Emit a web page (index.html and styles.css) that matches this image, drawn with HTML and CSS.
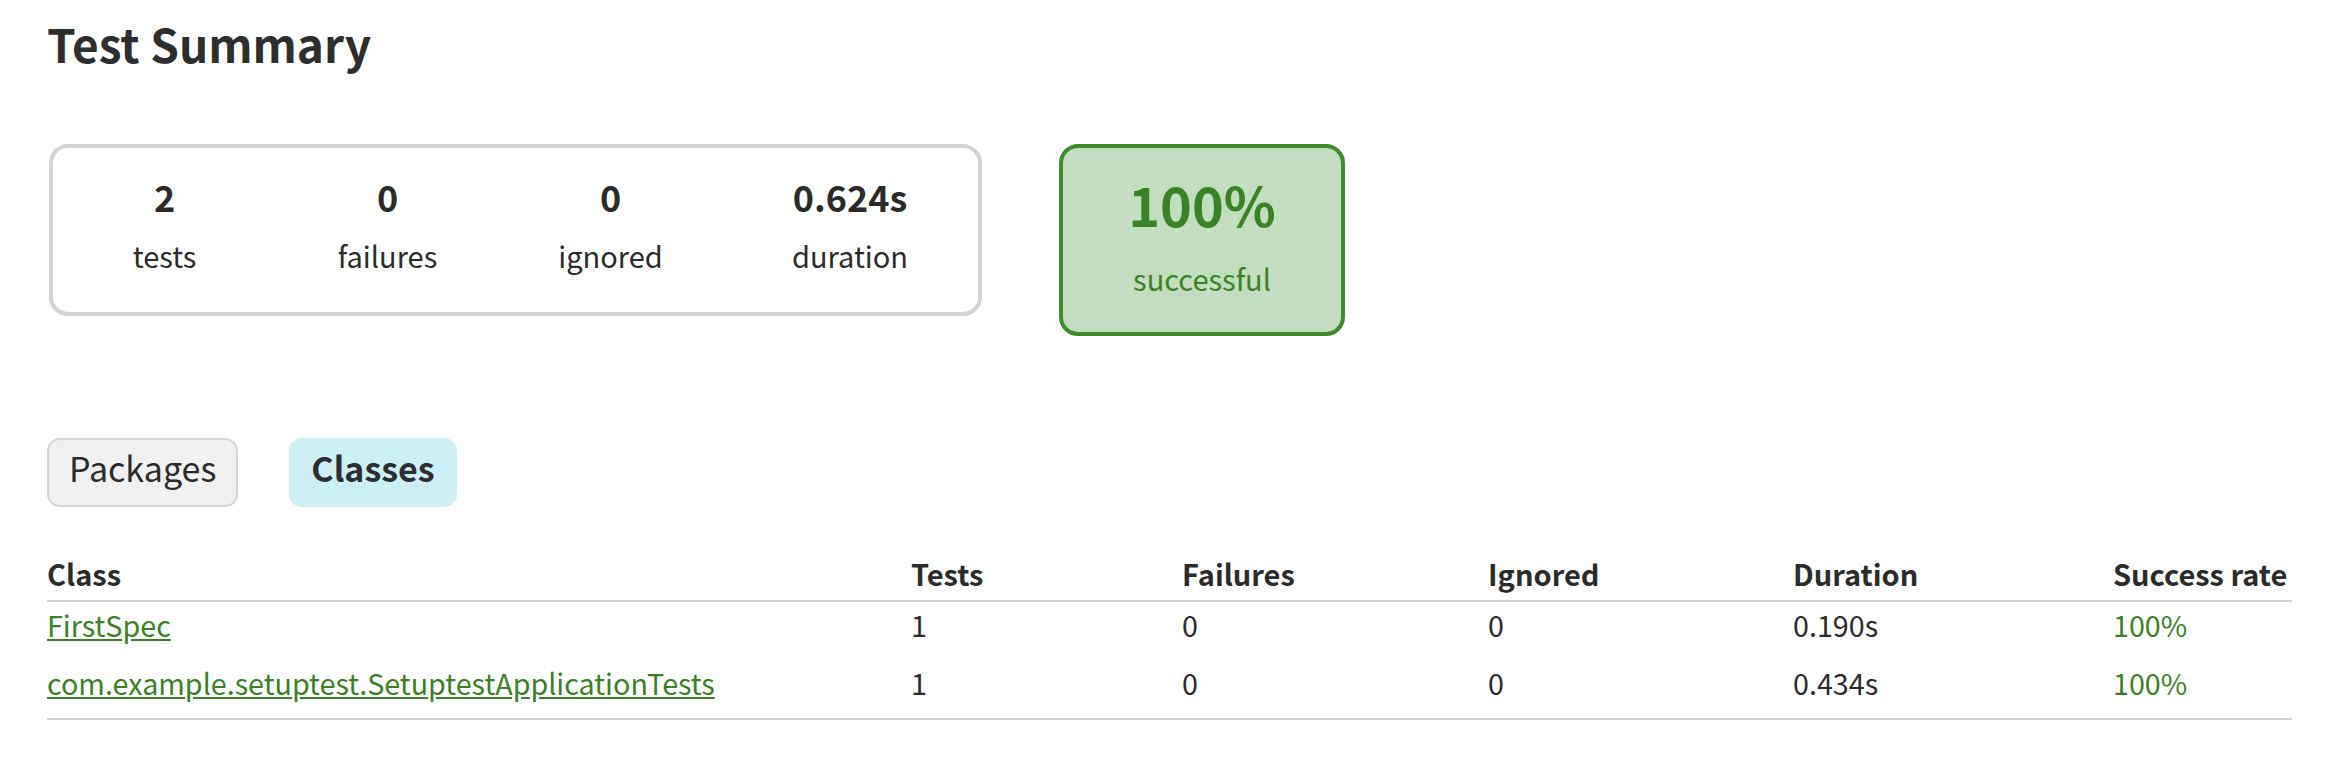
FILE: index.html
```html
<!DOCTYPE html>
<html>
<head>
<meta charset="utf-8">
<title>Test results - Test Summary</title>
<link rel="stylesheet" href="styles.css">
</head>
<body>
<div class="content">
  <h1 class="title">Test Summary</h1>
  <div class="summary">
    <div class="summary-group">
      <div class="info-box">
        <div class="counter">2</div>
        <p class="label">tests</p>
      </div>
      <div class="info-box">
        <div class="counter">0</div>
        <p class="label">failures</p>
      </div>
      <div class="info-box">
        <div class="counter">0</div>
        <p class="label">ignored</p>
      </div>
      <div class="info-box duration">
        <div class="counter">0.624s</div>
        <p class="label">duration</p>
      </div>
    </div>
    <div class="success-rate">
      <div class="percent">100%</div>
      <p class="success-label">successful</p>
    </div>
  </div>
  <ul class="tab-links">
    <li class="tab"><a href="#">Packages</a></li>
    <li class="tab selected"><a href="#">Classes</a></li>
  </ul>
  <table class="results">
    <colgroup>
      <col class="c-class">
      <col class="c-tests">
      <col class="c-failures">
      <col class="c-ignored">
      <col class="c-duration">
      <col class="c-rate">
    </colgroup>
    <thead>
      <tr>
        <th>Class</th>
        <th>Tests</th>
        <th>Failures</th>
        <th>Ignored</th>
        <th>Duration</th>
        <th>Success rate</th>
      </tr>
    </thead>
    <tbody>
      <tr>
        <td class="success"><a href="#">FirstSpec</a></td>
        <td>1</td>
        <td>0</td>
        <td>0</td>
        <td>0.190s</td>
        <td class="success">100%</td>
      </tr>
      <tr>
        <td class="success"><a href="#">com.example.setuptest.SetuptestApplicationTests</a></td>
        <td>1</td>
        <td>0</td>
        <td>0</td>
        <td>0.434s</td>
        <td class="success">100%</td>
      </tr>
    </tbody>
  </table>
</div>
</body>
</html>
```
FILE: styles.css
```css
html, body {
  margin: 0;
  padding: 0;
  background: #ffffff;
}
body {
  font-family: "Noto Sans CJK KR", "Noto Sans", sans-serif;
  color: #303030;
}
.content {
  padding: 13px 42px 0 47px;
}
.title {
  margin: 0;
  font-size: 46px;
  line-height: 60px;
  font-weight: bold;
  color: #2e2e2e;
}
.summary {
  display: flex;
  align-items: flex-start;
  margin-top: 71px;
  margin-left: 2px;
}
.summary-group {
  display: flex;
  border: 4px solid #d2d2d2;
  border-radius: 19px;
}
.info-box {
  width: 223px;
  padding: 30px 0 32px;
  text-align: center;
}
.info-box.duration {
  width: 256px;
}
.counter {
  font-size: 36px;
  line-height: 36px;
  font-weight: bold;
  margin-bottom: 16px;
  color: #2b2b2b;
}
.label {
  margin: 0;
  font-size: 29px;
  line-height: 50px;
  color: #2b2b2b;
}
.success-rate {
  margin-left: 77px;
  width: 278px;
  border: 4px solid #3f8a2c;
  border-radius: 19px;
  background: #c3ddc0;
  padding: 26px 0 29px;
  text-align: center;
  color: #3c8128;
}
.percent {
  font-size: 54px;
  line-height: 60px;
  font-weight: bold;
  margin-bottom: 19px;
}
.success-label {
  margin: 0;
  font-size: 29px;
  line-height: 50px;
}
.tab-links {
  display: flex;
  list-style: none;
  margin: 102px 0 0;
  padding: 0;
}
.tab {
  border: 2px solid #d4d4d4;
  background: #f0f0f0;
  border-radius: 13px;
  padding: 5px 20px 15px;
  margin-right: 51px;
}
.tab a {
  display: block;
  font-size: 34px;
  line-height: 45px;
  color: #2b2b2b;
  text-decoration: none;
}
.tab.selected {
  background: #cdeef3;
  border-color: #cdeef3;
}
.tab.selected a {
  font-weight: bold;
  color: #2a2e33;
}
.results {
  width: 2245px;
  table-layout: fixed;
  border-collapse: collapse;
  margin-top: 46px;
}
.c-class { width: 864px; }
.c-tests { width: 271px; }
.c-failures { width: 306px; }
.c-ignored { width: 305px; }
.c-duration { width: 320px; }
.c-rate { width: 179px; }
.results th {
  text-align: left;
  font-size: 29px;
  line-height: 40px;
  font-weight: bold;
  padding: 0 0 7px;
  border-bottom: 2px solid #d0d0d0;
  color: #2b2b2b;
  white-space: nowrap;
}
.results td {
  font-size: 28.7px;
  line-height: 40px;
  padding: 3px 0 15px;
  color: #2b2b2b;
  white-space: nowrap;
}
.results tbody tr:last-child td {
  border-bottom: 2px solid #d0d0d0;
}
.results td.success,
.results td.success a {
  color: #3c7f27;
}
```
